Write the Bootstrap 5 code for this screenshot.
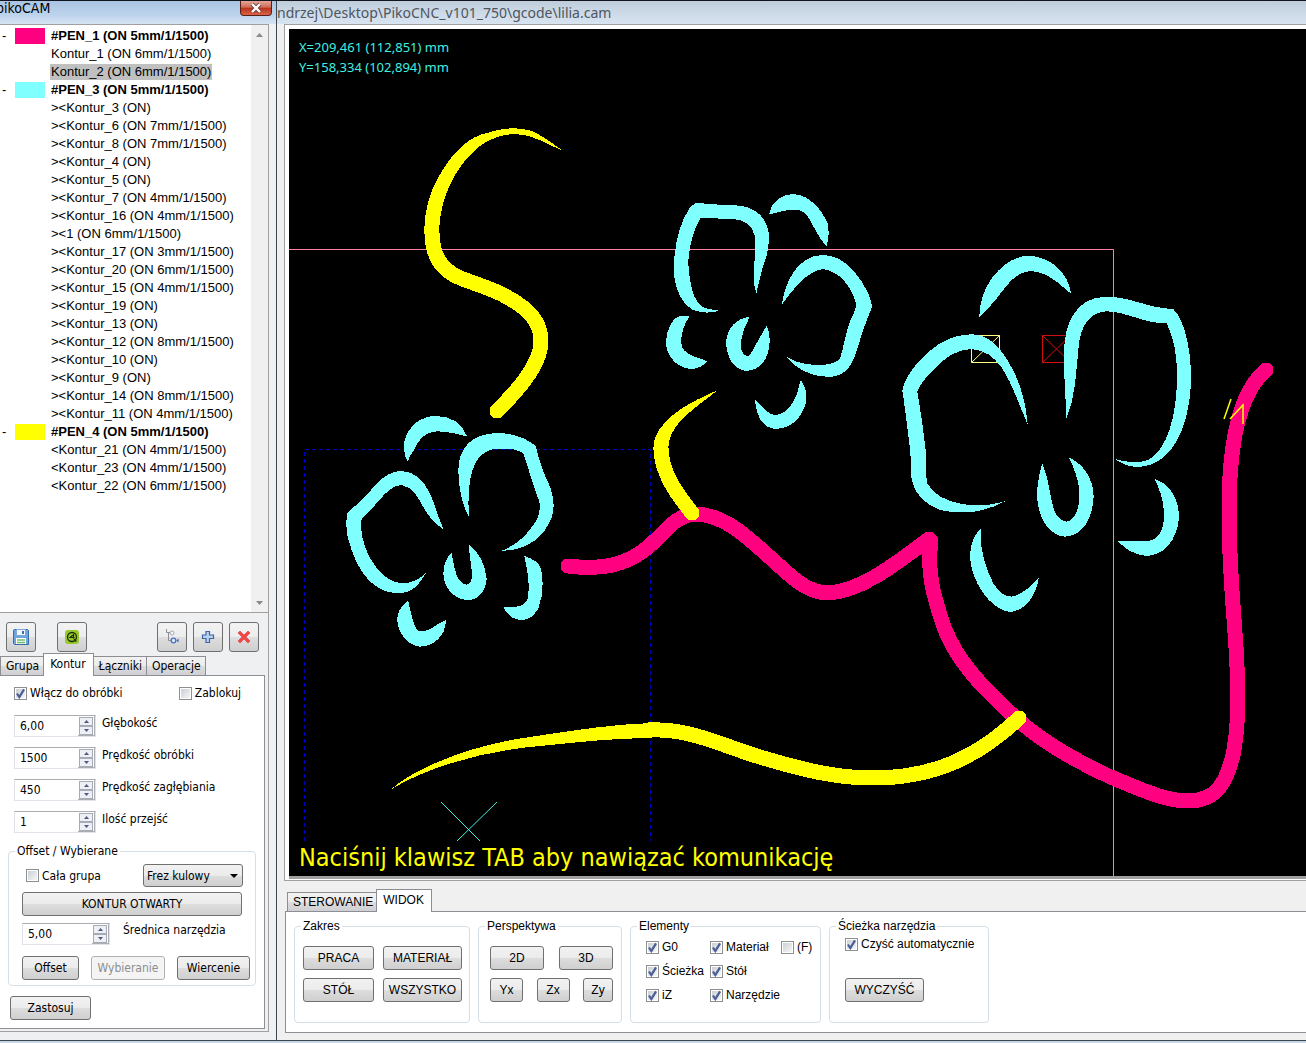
<!DOCTYPE html>
<html lang="pl">
<head>
<meta charset="utf-8">
<meta name="viewport" content="width=device-width, initial-scale=1">
<title>PikoCAM</title>
<link href="https://cdn.jsdelivr.net/npm/bootstrap@5.3.0/dist/css/bootstrap.min.css" rel="stylesheet">
<style>
:root { --tahoma: "DejaVu Sans Condensed", "Noto Sans", sans-serif; --arial: "Liberation Sans", Arial, sans-serif; }
body { font: 12px/14px var(--tahoma); color: #000; background: #f0f0f0; }
.app-shell { min-height: 100vh; border-top: 1px solid #10141c; }
.tool-window { width: 277px; background: #eff0f1; border-right: 1px solid #3c4650; }
.tool-title { height: 23px; background: linear-gradient(#a9c4e2, #bcd3ec 60%, #d5e3f2); font-size: 14px; line-height: 15px; }
.tool-title .caption { margin-left: -4px; }
.btn-close-win { width: 32px; height: 15px; margin-right: 4px; padding: 0; border: 1px solid #5c1f18; border-top: 0; border-radius: 0 0 4px 4px; background: linear-gradient(#e3a698, #cf6a55 45%, #b8301c 50%, #d9654a); line-height: 0; }
.inner-col { width: 269px; border-right: 1px solid #a0a0a0; border-bottom: 1px solid #a0a0a0; margin-bottom: 8px; }
.tree-box { height: 589px; background: #fff; border-top: 1px solid #a0a0a0; border-bottom: 1px solid #a0a0a0; font: 13px/18px var(--arial); }
.tree-list { padding-top: 2px; }
.tree-row { height: 18px; white-space: nowrap; }
.tree-row .sign { width: 15px; padding-left: 2px; }
.tree-row .swatch { width: 30px; height: 16px; margin-right: 5px; }
.tree-row .node { padding: 0 1px; line-height: 16px; }
.tree-row .picked { background: #c0c0c0; }
.c-pink { background: #ff0080; } .c-cyan { background: #80ffff; } .c-yellow { background: #ffff00; }
.scroll-track { width: 17px; background: #f0f0f0; padding: 8px 0 7px; }
.icon-btn { width: 30px; height: 30px; padding: 0; border: 1px solid #707070; border-radius: 3px; background: linear-gradient(#f3f3f3, #ececec 50%, #dedede 51%, #cfcfcf); line-height: 0; }
.tool-row { padding: 9px 9px 0 6px; height: 40px; gap: 21px; }
.edit-btns { gap: 6px; }
.side-tabs { padding-left: 1px; }
.win-tabs .nav-link { height: 19px; padding: 0 4px 0 5px; color: #000; border: 1px solid #8c8e94; border-bottom: 0; border-radius: 0; background: linear-gradient(#f2f2f2, #ebebeb 50%, #dddddd 51%, #cfcfd4); line-height: 19px; white-space: nowrap; margin-left: -1px; }
.win-tabs .nav-link.active { height: 23px; padding: 0 7px 0 6px; line-height: 21px; background: #fff; position: relative; margin-bottom: -1px; }
.tab-page { background: #fff; border: 1px solid #8c8e94; }
.left-page { border-left: 0; margin-right: 3px; padding: 10px 9px 8px 14px; height: 354px; margin-bottom: 2px; }
.first-row { margin-bottom: 15px; }
.first-row label:last-child { margin: 0 14px 0 auto; }
.win-btn { height: 24px; padding: 0; border: 1px solid #707070; border-radius: 3px; background: linear-gradient(#f2f2f2, #ebebeb 50%, #dddddd 51%, #cfcfcf); line-height: 20px; color: #000; text-align: center; font-size: 12px; }
.win-btn:disabled { background: #f4f4f4; border-color: #adb2b5; color: #8d8d8d; }
.win-check { appearance: none; flex: none; width: 13px; height: 13px; margin: 0 3px 0 0; border: 1px solid #8e8f8f; background: linear-gradient(135deg, #cbcfd5, #f6f6f6) content-box #f4f4f4; padding: 1px; }
.win-check:checked { background: url("data:image/svg+xml,%3Csvg xmlns='http://www.w3.org/2000/svg' viewBox='0 0 11 11'%3E%3Cpath d='M2.5 5.5 4.5 8.500 8.500 2' fill='none' stroke='%234b5f97' stroke-width='1.900'/%3E%3C/svg%3E") border-box center, linear-gradient(135deg, #cbcfd5, #f6f6f6) content-box #f4f4f4; }
.spin { width: 82px; height: 22px; border: 1px solid #e2e3ea; border-top-color: #abadb3; background: #fff; }
.spin.wide { width: 88px; }
.spin input { flex: 1; min-width: 0; border: 0; padding: 0 0 0 5px; background: none; font: inherit; color: #000; font-size: 12px; }
.spin .steps { width: 17px; border: 1px solid #abadb3; border-width: 0 1px 1px 0; padding: 1px; }
.spin .steps button { height: 9px; padding: 0; border: 1px solid #a6abb8; background: #eef0f4; line-height: 0; display: flex; align-items: center; justify-content: center; }
.param { height: 32px; gap: 6px; }
.param label { padding-top: 1px; }
.group-frame { --pad: 8px; padding-left: var(--pad); border: 1px solid #d5dfe5; border-radius: 4px; min-width: 0; }
.group-frame > legend { float: none; width: auto; margin: 0 0 0 calc(6px - var(--pad)); padding: 0 2px; font-size: 12px; line-height: 14px; }
.offset-group { --pad: 13px; margin: 1px 0 10px -6px; padding-right: 5px; height: 142px; width: 248px; }
.kind-row { padding: 6px 7px 0 4px; margin-bottom: 5px; }
.tool-size { gap: 13px; margin: 7px 0 11px; }
.w-full { width: 220px; } .w-off { width: 57px; } .w-wyb { width: 74px; } .w-wie { width: 73px; }
.apply-btn { width: 81px; margin-left: -4px; }
.kind-select { width: 100px; height: 23px; padding: 0 3px; appearance: none; border: 1px solid #707070; border-radius: 3px; color: #000; font-size: 12px; background: url("data:image/svg+xml,%3Csvg xmlns='http://www.w3.org/2000/svg' viewBox='0 0 8 4'%3E%3Cpath d='M0 0h8L4 4z'/%3E%3C/svg%3E") right 4px center/8px 4px no-repeat, linear-gradient(#f2f2f2, #ebebeb 50%, #dddddd 51%, #cfcfcf); }
.main-title { height: 23px; background: linear-gradient(#bfcddb, #d9e4f1); color: #4d5660; font: 14px/23px "Noto Sans", sans-serif; white-space: nowrap; overflow: hidden; }
.main-body { padding-left: 7px; }
.canvas-frame { border: 1px solid #a0a0a0; border-right: 0; padding: 4px 0 1px 4px; background: #fff; height: 857px; }
.cam-view { background: #000; border-bottom: 3px solid #a0a0a0; position: relative; padding: 8px 10px 4px; }
.cam-view svg { position: absolute; inset: 0; width: 100%; height: 100%; }
.coords { color: #40f0e0; font: 13px/20px "Noto Sans", sans-serif; position: relative; }
.prompt-line { color: #ffff00; font-size: 25px; line-height: 28px; position: relative; white-space: nowrap; }
.main-tabs { padding: 8px 0 0 4px; }
.main-tabs .nav-link:first-child { padding-right: 3px; }
.main-page { border-right: 0; padding: 7px 8px 0; height: 122px; gap: 8px; margin-left: 1px; }
.arial { font-family: var(--arial); }
.main-page .group-frame { height: 104px; }
.g-range { width: 176px; padding-top: 13px; padding-right: 7px; }
.g-persp { --pad: 11px; width: 144px; padding-top: 13px; padding-right: 8px; }
.g-elem { --pad: 15px; width: 191px; padding-top: 2px; }
.g-path { --pad: 15px; width: 160px; padding-top: 4px; }
.g-path label { margin-bottom: 27px; }
.w-a { width: 71px; } .w-b { width: 79px; } .w-c { width: 54px; } .w-d { width: 33px; } .w-e { width: 30px; }
.elem-grid { display: grid; grid-template-columns: 64px 71px 1fr; grid-auto-rows: 24px; white-space: nowrap; }
.win-foot { height: 5px; padding-left: 180px; gap: 64px; background: #c8d8ea; border-top: 1px solid #3c4650; border-bottom: 1px solid #46607c; margin-top: auto; }
.win-foot i { width: 60px; height: 1px; background: #10141c; align-self: flex-end; }
.win-foot i:first-child { margin-right: 248px; }
</style>
</head>
<body>
<div class="app-shell d-flex flex-column">
<div class="d-flex flex-grow-1">
<aside class="tool-window flex-shrink-0 d-flex flex-column">
  <header class="tool-title d-flex justify-content-between overflow-hidden">
    <span class="caption">pikoCAM</span>
    <button type="button" class="btn-close-win" aria-label="Zamknij"><svg width="12" height="10" viewBox="0 0 12 10"><path d="M2 1l8 8M10 1L2 9" stroke="#6b3a35" stroke-width="4"/><path d="M2 1l8 8M10 1L2 9" stroke="#fff" stroke-width="2.400"/></svg></button>
  </header>
  <div class="inner-col">
    <div class="tree-box d-flex">
      <ul class="tree-list list-unstyled flex-grow-1 mb-0">
        <li class="tree-row d-flex align-items-center fw-bold"><span class="sign fw-normal">-</span><span class="swatch c-pink"></span><span class="node">#PEN_1 (ON 5mm/1/1500)</span></li>
        <li class="tree-row d-flex align-items-center"><span class="sign"></span><span class="swatch"></span><span class="node">Kontur_1 (ON 6mm/1/1500)</span></li>
        <li class="tree-row d-flex align-items-center"><span class="sign"></span><span class="swatch"></span><span class="node picked">Kontur_2 (ON 6mm/1/1500)</span></li>
        <li class="tree-row d-flex align-items-center fw-bold"><span class="sign fw-normal">-</span><span class="swatch c-cyan"></span><span class="node">#PEN_3 (ON 5mm/1/1500)</span></li>
        <li class="tree-row d-flex align-items-center"><span class="sign"></span><span class="swatch"></span><span class="node">&gt;&lt;Kontur_3 (ON)</span></li>
        <li class="tree-row d-flex align-items-center"><span class="sign"></span><span class="swatch"></span><span class="node">&gt;&lt;Kontur_6 (ON 7mm/1/1500)</span></li>
        <li class="tree-row d-flex align-items-center"><span class="sign"></span><span class="swatch"></span><span class="node">&gt;&lt;Kontur_8 (ON 7mm/1/1500)</span></li>
        <li class="tree-row d-flex align-items-center"><span class="sign"></span><span class="swatch"></span><span class="node">&gt;&lt;Kontur_4 (ON)</span></li>
        <li class="tree-row d-flex align-items-center"><span class="sign"></span><span class="swatch"></span><span class="node">&gt;&lt;Kontur_5 (ON)</span></li>
        <li class="tree-row d-flex align-items-center"><span class="sign"></span><span class="swatch"></span><span class="node">&gt;&lt;Kontur_7 (ON 4mm/1/1500)</span></li>
        <li class="tree-row d-flex align-items-center"><span class="sign"></span><span class="swatch"></span><span class="node">&gt;&lt;Kontur_16 (ON 4mm/1/1500)</span></li>
        <li class="tree-row d-flex align-items-center"><span class="sign"></span><span class="swatch"></span><span class="node">&gt;&lt;1 (ON 6mm/1/1500)</span></li>
        <li class="tree-row d-flex align-items-center"><span class="sign"></span><span class="swatch"></span><span class="node">&gt;&lt;Kontur_17 (ON 3mm/1/1500)</span></li>
        <li class="tree-row d-flex align-items-center"><span class="sign"></span><span class="swatch"></span><span class="node">&gt;&lt;Kontur_20 (ON 6mm/1/1500)</span></li>
        <li class="tree-row d-flex align-items-center"><span class="sign"></span><span class="swatch"></span><span class="node">&gt;&lt;Kontur_15 (ON 4mm/1/1500)</span></li>
        <li class="tree-row d-flex align-items-center"><span class="sign"></span><span class="swatch"></span><span class="node">&gt;&lt;Kontur_19 (ON)</span></li>
        <li class="tree-row d-flex align-items-center"><span class="sign"></span><span class="swatch"></span><span class="node">&gt;&lt;Kontur_13 (ON)</span></li>
        <li class="tree-row d-flex align-items-center"><span class="sign"></span><span class="swatch"></span><span class="node">&gt;&lt;Kontur_12 (ON 8mm/1/1500)</span></li>
        <li class="tree-row d-flex align-items-center"><span class="sign"></span><span class="swatch"></span><span class="node">&gt;&lt;Kontur_10 (ON)</span></li>
        <li class="tree-row d-flex align-items-center"><span class="sign"></span><span class="swatch"></span><span class="node">&gt;&lt;Kontur_9 (ON)</span></li>
        <li class="tree-row d-flex align-items-center"><span class="sign"></span><span class="swatch"></span><span class="node">&gt;&lt;Kontur_14 (ON 8mm/1/1500)</span></li>
        <li class="tree-row d-flex align-items-center"><span class="sign"></span><span class="swatch"></span><span class="node">&gt;&lt;Kontur_11 (ON 4mm/1/1500)</span></li>
        <li class="tree-row d-flex align-items-center fw-bold"><span class="sign fw-normal">-</span><span class="swatch c-yellow"></span><span class="node">#PEN_4 (ON 5mm/1/1500)</span></li>
        <li class="tree-row d-flex align-items-center"><span class="sign"></span><span class="swatch"></span><span class="node">&lt;Kontur_21 (ON 4mm/1/1500)</span></li>
        <li class="tree-row d-flex align-items-center"><span class="sign"></span><span class="swatch"></span><span class="node">&lt;Kontur_23 (ON 4mm/1/1500)</span></li>
        <li class="tree-row d-flex align-items-center"><span class="sign"></span><span class="swatch"></span><span class="node">&lt;Kontur_22 (ON 6mm/1/1500)</span></li>
      </ul>
      <div class="scroll-track d-flex flex-column justify-content-between align-items-center">
        <svg width="7" height="4"><path d="M0 4h7L3.500 0z" fill="#8a8a8a"/></svg>
        <svg width="7" height="4"><path d="M0 0h7L3.500 4z" fill="#8a8a8a"/></svg>
      </div>
    </div>
    <div class="tool-row d-flex">
      <button type="button" class="icon-btn" aria-label="Zapisz"><svg width="18" height="18"><path d="M1.500 2.500q0-1 1-1h13l1 1v14h-14l-1-1z" fill="#6fa3dc" stroke="#3a6cab"/><path d="M4.500 1.500h9v6h-9z" fill="#f3f8ff" stroke="#7ba6d8"/><path d="M10 3h2v3h-2z" fill="#3a6cab"/><path d="M4 10h10v6H4z" fill="#fff"/><path d="M5 12h8M5 14.500h8" stroke="#6cc06a" stroke-width="1.500"/></svg></button>
      <button type="button" class="icon-btn" aria-label="Symulacja"><svg width="14" height="14"><rect width="14" height="14" rx="3" fill="#97c92c"/><circle cx="7" cy="7" r="4.500" fill="none" stroke="#1d2a06" stroke-width="1.300"/><path d="M8.500 4v4.500M8.500 4.500L5 7.500h4.500M9 9l2.500 2.500" fill="none" stroke="#1d2a06" stroke-width="1.100"/></svg></button>
      <div class="edit-btns d-flex ms-auto">
      <button type="button" class="icon-btn" aria-label="Struktura"><svg width="16" height="16"><path d="M2.500 0v3.500H6M4.500 3.500v8H7" fill="none" stroke="#8d9096"/><circle cx="8" cy="4" r="2" fill="#f7f7f7" stroke="#a5a9b0"/><circle cx="9.500" cy="11.500" r="2.300" fill="#dfe9fb" stroke="#4c6fc0" stroke-width="1.300"/><path d="M14.500 9.500v4l-2-2z" fill="#3f5ca8"/></svg></button>
      <button type="button" class="icon-btn" aria-label="Dodaj"><svg width="14" height="14"><path d="M5 1.500h3.500V5H12.500v3.500H8.500v4H5v-4H1.500V5H5z" fill="#b9d3f2" stroke="#3f659f" stroke-width="1.200"/></svg></button>
      <button type="button" class="icon-btn" aria-label="Usuń"><svg width="14" height="14"><path d="M1 3l2-2 4 4 4-4 2 2-4 4 4 4-2 2-4-4-4 4-2-2 4-4z" fill="#f04848" stroke="#d83a3a" stroke-width=".6"/></svg></button>
      </div>
    </div>
    <nav class="win-tabs side-tabs nav align-items-end flex-nowrap">
      <a class="nav-link" href="#grupa">Grupa</a><a class="nav-link active" href="#kontur">Kontur</a><a class="nav-link" href="#laczniki">Łączniki</a><a class="nav-link" href="#operacje">Operacje</a>
    </nav>
    <form class="tab-page left-page">
      <div class="first-row d-flex">
        <label class="d-flex align-items-center"><input type="checkbox" class="win-check" checked>Włącz do obróbki</label>
        <label class="d-flex align-items-center"><input type="checkbox" class="win-check">Zablokuj</label>
      </div>
      <div class="param d-flex"><div class="spin d-flex"><input id="depth" value="6,00"><div class="steps"><button type="button" class="w-100" aria-label="Więcej"><svg width="5" height="3"><path d="M0 3h5L2.500 0z" fill="#4e5a85"/></svg></button><button type="button" class="w-100" aria-label="Mniej"><svg width="5" height="3"><path d="M0 0h5L2.500 3z" fill="#4e5a85"/></svg></button></div></div><label for="depth">Głębokość</label></div>
      <div class="param d-flex"><div class="spin d-flex"><input id="feed" value="1500"><div class="steps"><button type="button" class="w-100" aria-label="Więcej"><svg width="5" height="3"><path d="M0 3h5L2.500 0z" fill="#4e5a85"/></svg></button><button type="button" class="w-100" aria-label="Mniej"><svg width="5" height="3"><path d="M0 0h5L2.500 3z" fill="#4e5a85"/></svg></button></div></div><label for="feed">Prędkość obróbki</label></div>
      <div class="param d-flex"><div class="spin d-flex"><input id="plunge" value="450"><div class="steps"><button type="button" class="w-100" aria-label="Więcej"><svg width="5" height="3"><path d="M0 3h5L2.500 0z" fill="#4e5a85"/></svg></button><button type="button" class="w-100" aria-label="Mniej"><svg width="5" height="3"><path d="M0 0h5L2.500 3z" fill="#4e5a85"/></svg></button></div></div><label for="plunge">Prędkość zagłębiania</label></div>
      <div class="param d-flex"><div class="spin d-flex"><input id="passes" value="1"><div class="steps"><button type="button" class="w-100" aria-label="Więcej"><svg width="5" height="3"><path d="M0 3h5L2.500 0z" fill="#4e5a85"/></svg></button><button type="button" class="w-100" aria-label="Mniej"><svg width="5" height="3"><path d="M0 0h5L2.500 3z" fill="#4e5a85"/></svg></button></div></div><label for="passes">Ilość przejść</label></div>
      <fieldset class="group-frame offset-group">
        <legend>Offset / Wybierane</legend>
        <div class="kind-row d-flex align-items-center justify-content-between">
          <label class="d-flex align-items-center"><input type="checkbox" class="win-check">Cała grupa</label>
          <select class="kind-select" aria-label="Rodzaj freza"><option>Frez kulowy</option></select>
        </div>
        <button type="button" class="win-btn w-full d-block">KONTUR OTWARTY</button>
        <div class="tool-size d-flex"><div class="spin wide d-flex"><input id="tool" value="5,00"><div class="steps"><button type="button" class="w-100" aria-label="Więcej"><svg width="5" height="3"><path d="M0 3h5L2.500 0z" fill="#4e5a85"/></svg></button><button type="button" class="w-100" aria-label="Mniej"><svg width="5" height="3"><path d="M0 0h5L2.500 3z" fill="#4e5a85"/></svg></button></div></div><label for="tool">Średnica narzędzia</label></div>
        <div class="d-flex justify-content-between"><button type="button" class="win-btn w-off">Offset</button><button type="button" class="win-btn w-wyb" disabled>Wybieranie</button><button type="button" class="win-btn w-wie">Wiercenie</button></div>
      </fieldset>
      <button type="submit" class="win-btn apply-btn">Zastosuj</button>
    </form>
  </div>
</aside>
<main class="flex-grow-1 d-flex flex-column overflow-hidden">
  <header class="main-title">ndrzej\Desktop\PikoCNC_v101_750\gcode\lilia.cam</header>
  <div class="main-body">
    <section class="canvas-frame d-flex">
      <div class="cam-view flex-grow-1 d-flex flex-column justify-content-between">
        <svg aria-hidden="true">
          <g transform="translate(-289 -29)" fill="none">
            <path d="M289 249.500H1113.500V876" stroke="#ff80a0"/>
            <path d="M304.500 841V449.500H650.500V841" stroke="#0000c0" stroke-dasharray="4 3"/>
            <path d="M971.500 335.500h28v27h-28zM971.500 362.500l28-27" stroke="#ffff80"/>
            <path d="M1042.500 335.500h28v27h-28zM1042.500 362.500l28-27M1042.500 335.500l28 27" stroke="#d01010"/>
            <path d="M441 802l39 39M497 802l-40 39" stroke="#40f0e0"/>
            <g shape-rendering="crispEdges">
            <path d="M568 566C600 570 625 566 647 548C665 533 675 514 697 514C725 516 745 535 765 553C790 575 805 593 829 593C865 590 900 560 929 539L931 541C927 570 932 592 944 627C957 662 985 690 1018 720C1046 745 1080 763 1113 778C1140 789 1165 801 1188 801C1218 801 1227 780 1233 755C1240 720 1237 690 1237 667C1236 630 1229 580 1229 510C1229 440 1240 405 1253 385Q1260 375 1266 370" stroke="#ff0080" stroke-width="15" stroke-linecap="round" stroke-linejoin="round"/>
            <g stroke="#ffff00" stroke-width="15">
              <path d="M497 411C517 391 541 365 541 341C541 322 529 309 507 297C492 288 474 284 458 277C441 269 432 255 432 233"/>
              <path d="M692 513C676 493 661 472 661 448"/>
              <path d="M1019 718C975 760 930 778 872 778C835 778 800 769 760 757C720 745 690 728 648 730"/>
              <path d="M497 411h.01M692 513h.01M1019 718h.01" stroke-linecap="round"/>
            </g>
            <g fill="#ffff00">
              <path d="M424 234C424 210 430 193 437 180C451 152 470 136 487 133C512 124 533 130 538 134C547 139 555 145 563 151C547 144 530 133 513 134C497 135 483 141 470 155C458 168 439 195 439 234Z"/>
              <path d="M718 390C690 402 653 420 653 450H668C668 425 690 412 718 390Z"/>
              <path d="M390 790C425 760 490 742 530 737C575 730 615 724 652 723V738C615 738 580 742 540 746C490 750 430 765 390 790Z"/>
            </g>
            <g fill="#80ffff">
              <g transform="translate(330 400) scale(.33333)">
                <path d="M233 185C222 165 222 145 223 125C235 75 275 48 318 48C365 48 395 70 412 110C385 104 360 94 320 94C285 94 265 120 252 150C243 162 238 172 233 185Z"/>
                <path d="M341 388C325 355 315 315 300 280C280 240 250 212 212 213C160 215 130 265 98 298C80 315 65 325 52 340C45 380 50 415 65 450C90 520 130 578 205 580C250 578 265 555 287 520C265 540 245 550 215 550C160 545 125 490 107 445C95 415 90 385 95 355C115 340 130 320 148 300C165 282 185 255 215 255C250 262 265 295 285 330C300 355 320 375 341 388Z"/>
                <path d="M416 350C395 310 385 260 385 210C385 140 430 98 510 99C555 102 590 115 617 138C630 190 640 220 660 260C675 300 672 330 665 352C640 420 580 452 516 452C560 435 590 405 610 375C628 350 632 330 628 305C612 265 600 220 580 160C560 147 540 145 505 146C450 148 425 190 418 260C414 290 416 320 416 350Z"/>
                <path d="M418 433C445 455 465 490 470 535C468 575 445 600 412 600C370 598 340 560 340 520C342 490 350 470 365 458C370 490 375 520 387 540C405 560 420 558 425 535C428 500 415 465 418 433Z"/>
                <path d="M583 468C605 475 625 485 633 505C642 550 638 590 625 625C610 650 595 662 570 660C540 655 530 640 521 622C555 622 580 622 592 600C602 560 592 510 583 468Z"/>
                <path d="M234 601C210 620 200 640 202 665C207 700 230 735 268 740C300 740 320 725 335 705C345 690 346 675 348 660C325 670 310 682 295 690C280 695 265 697 258 685C245 660 242 630 234 601Z"/>
              </g>
              <g transform="translate(640 180) scale(.33333)">
                <path d="M174 68C210 75 250 73 300 77C355 85 385 120 387 170C388 220 370 250 362 285C358 305 353 320 349 340C340 315 340 290 341 270C345 230 347 200 345 170C338 135 315 120 280 117L182 114C160 145 145 210 145 250C148 300 155 345 175 370C190 388 212 388 238 392C205 402 180 398 155 388C125 370 108 330 103 290C98 210 115 140 145 90C152 80 162 70 174 68Z"/>
                <path d="M386 104C395 65 425 42 460 42C510 45 545 90 563 130C568 155 566 175 560 198C540 180 530 155 518 135C508 115 495 95 480 91C445 85 415 98 386 104Z"/>
                <path d="M425 375C435 310 470 225 550 225C610 228 640 270 665 305C680 330 692 350 696 380C680 420 665 460 652 505C640 550 620 590 565 591C510 590 465 565 442 532C475 552 510 556 555 554C580 550 590 545 600 537C612 500 615 460 632 420C640 400 648 390 648 372C635 320 600 275 550 267C500 275 465 320 425 375Z"/>
                <path d="M118 408L148 409C132 435 122 460 124 490C128 525 165 528 201 544C190 560 170 567 148 567C100 558 78 520 78 485C80 445 98 415 118 408Z"/>
                <path d="M329 411C290 413 260 445 258 490C262 540 285 570 320 573C365 570 390 530 389 480C388 460 385 450 380 438C360 470 345 500 330 525C318 532 308 525 303 505C300 470 315 440 329 411Z"/>
                <path d="M482 600C500 625 502 650 497 670C485 710 460 745 405 747C370 742 350 715 345 660C365 675 380 700 403 705C430 705 445 690 460 665C472 645 476 620 482 600Z"/>
              </g>
              <g transform="translate(890 240) scale(.33333)">
                <path d="M268 231C268 190 280 150 305 115C340 70 375 48 420 47C480 52 535 95 543 161C510 135 475 95 420 93C370 98 345 145 320 175C300 200 285 215 268 231Z"/>
                <path d="M413 553C408 490 390 420 355 365C325 315 290 283 245 283C170 283 115 330 75 378C55 405 42 425 37 452C45 500 50 550 58 610C65 650 60 690 65 720C75 765 110 800 160 812C230 825 285 815 345 784C300 798 260 798 222 793C170 785 130 765 112 730C105 700 110 660 107 630C100 570 92 510 82 455C90 435 105 415 125 395C160 355 200 327 245 327C285 330 310 350 333 380C365 425 385 490 413 553Z"/>
                <path d="M529 536C528 480 521 410 522 340C522 240 565 175 640 171C710 165 770 205 850 207C885 245 900 320 903 400C905 530 860 680 740 681C710 680 690 668 676 657C710 668 745 670 775 660C830 630 862 530 861 400C861 340 850 290 830 250C760 250 710 215 650 214C600 215 570 260 566 320C558 400 555 480 529 536Z"/>
                <path d="M457 670C475 710 480 770 492 810C505 840 525 850 540 842C565 825 572 780 567 740C562 710 550 680 537 652C575 670 610 710 611 770C608 840 575 888 525 890C470 885 443 825 441 765C442 730 448 700 457 670Z"/>
                <path d="M793 717C840 730 868 780 867 835C860 900 825 945 770 948C730 945 705 925 684 904L770 903C800 902 820 880 822 830C822 790 812 750 793 717Z"/>
                <path d="M272 867C270 930 285 980 310 1030C330 1060 345 1070 365 1070C400 1062 420 1040 446 1015C440 1060 410 1112 360 1116C300 1110 240 1020 240 945C242 915 250 885 272 867Z"/>
              </g>
            </g>
            </g>
            <path d="M1231 399l-7 20M1230 419l13-14v19" stroke="#ffff00" stroke-width="1.500"/>
          </g>
        </svg>
        <div class="coords"><div>X=209,461 (112,851) mm</div><div>Y=158,334 (102,894) mm</div></div>
        <div class="prompt-line">Naciśnij klawisz TAB aby nawiązać komunikację</div>
      </div>
    </section>
    <nav class="win-tabs main-tabs nav align-items-end flex-nowrap arial">
      <a class="nav-link" href="#sterowanie">STEROWANIE</a><a class="nav-link active" href="#widok">WIDOK</a>
    </nav>
    <section class="tab-page main-page d-flex arial">
      <fieldset class="group-frame g-range"><legend>Zakres</legend>
        <div class="d-flex justify-content-between mb-2"><button type="button" class="win-btn w-a">PRACA</button><button type="button" class="win-btn w-b">MATERIAŁ</button></div>
        <div class="d-flex justify-content-between"><button type="button" class="win-btn w-a">STÓŁ</button><button type="button" class="win-btn w-b">WSZYSTKO</button></div>
      </fieldset>
      <fieldset class="group-frame g-persp"><legend>Perspektywa</legend>
        <div class="d-flex justify-content-between mb-2"><button type="button" class="win-btn w-c">2D</button><button type="button" class="win-btn w-c">3D</button></div>
        <div class="d-flex justify-content-between"><button type="button" class="win-btn w-d">Yx</button><button type="button" class="win-btn w-d">Zx</button><button type="button" class="win-btn w-e">Zy</button></div>
      </fieldset>
      <fieldset class="group-frame g-elem"><legend>Elementy</legend>
        <div class="elem-grid">
          <label class="d-flex align-items-center"><input type="checkbox" class="win-check" checked>G0</label>
          <label class="d-flex align-items-center"><input type="checkbox" class="win-check" checked>Materiał</label>
          <label class="d-flex align-items-center"><input type="checkbox" class="win-check">(F)</label>
          <label class="d-flex align-items-center"><input type="checkbox" class="win-check" checked>Ścieżka</label>
          <label class="d-flex align-items-center"><input type="checkbox" class="win-check" checked>Stół</label><span></span>
          <label class="d-flex align-items-center"><input type="checkbox" class="win-check" checked>iZ</label>
          <label class="d-flex align-items-center"><input type="checkbox" class="win-check" checked>Narzędzie</label>
        </div>
      </fieldset>
      <fieldset class="group-frame g-path"><legend>Ścieżka narzędzia</legend>
        <label class="d-flex align-items-center text-nowrap"><input type="checkbox" class="win-check" checked>Czyść automatycznie</label>
        <button type="button" class="win-btn w-b">WYCZYŚĆ</button>
      </fieldset>
    </section>
  </div>
</main>
</div>
<footer class="win-foot d-flex"><i></i><i></i><i></i><i></i></footer>
</div>
<script src="https://cdn.jsdelivr.net/npm/bootstrap@5.3.0/dist/js/bootstrap.bundle.min.js"></script>
</body>
</html>
